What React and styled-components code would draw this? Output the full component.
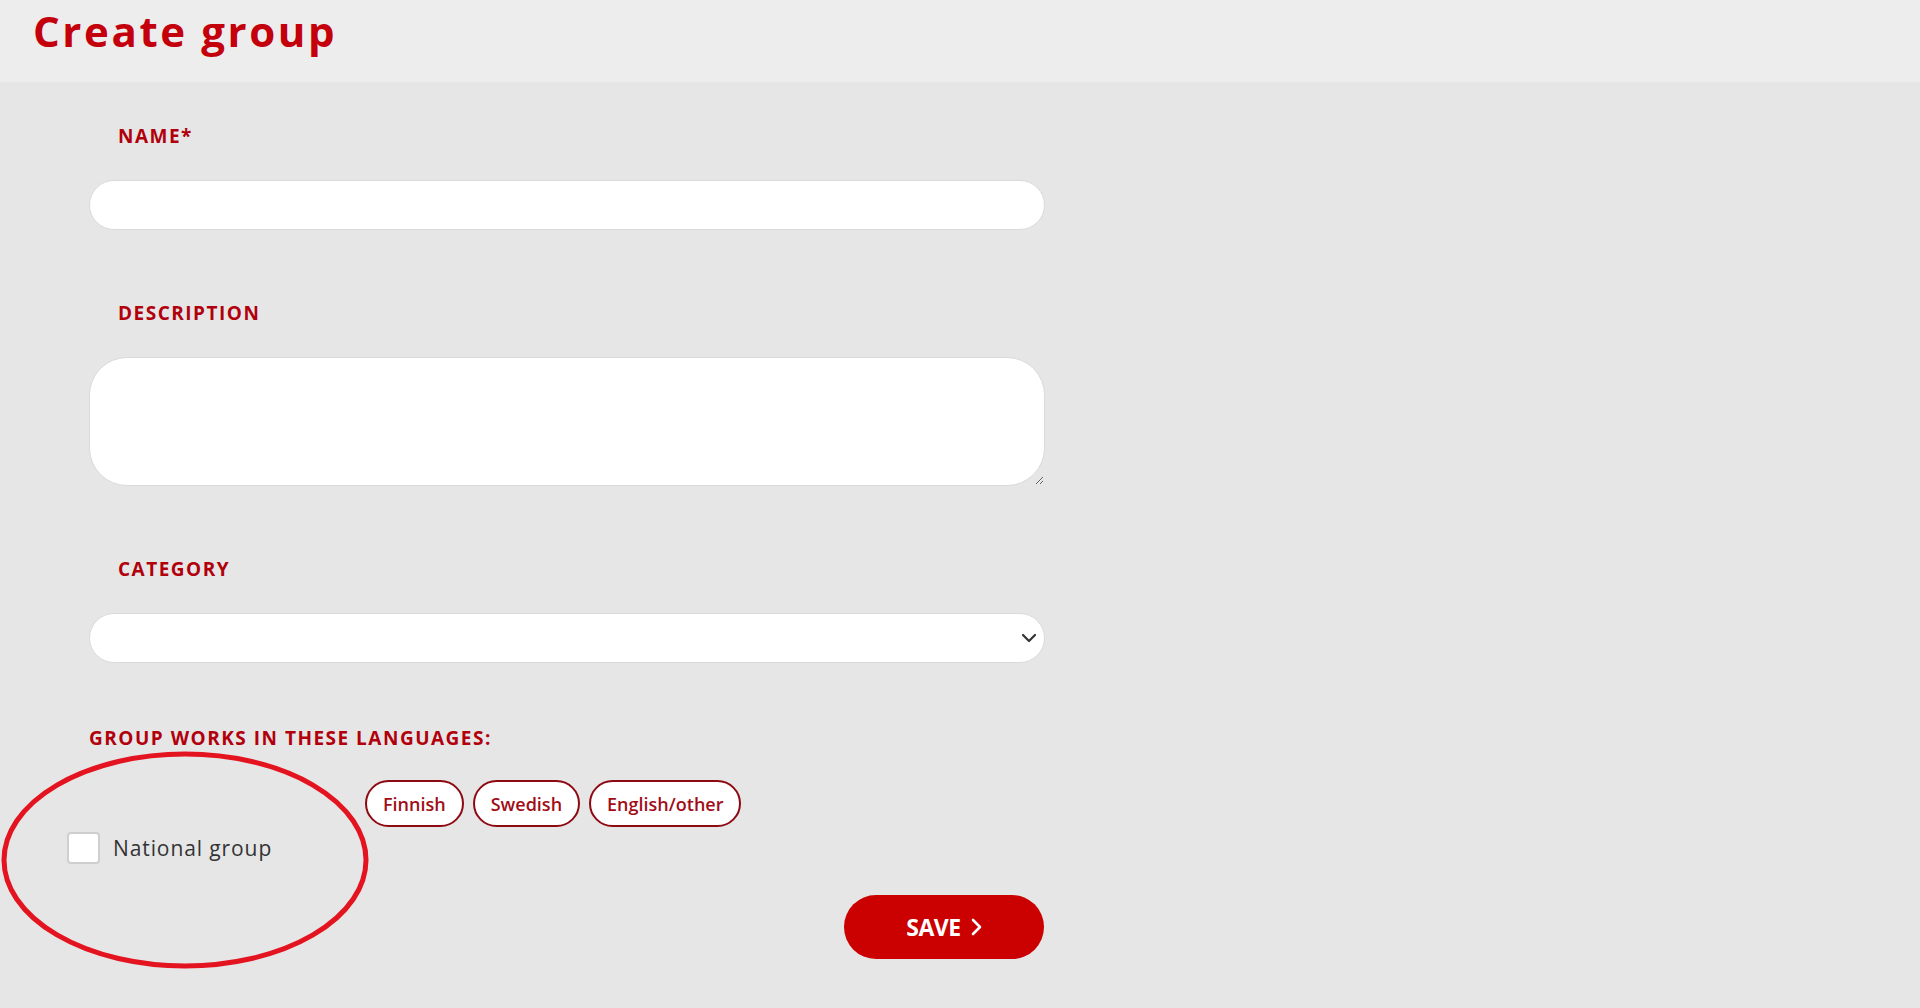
import React from "react";
import styled, { createGlobalStyle } from "styled-components";

const GlobalStyle = createGlobalStyle`
  html, body { margin: 0; padding: 0; }
  body {
    background: #e6e6e6;
    font-family: "Open Sans", "Liberation Sans", sans-serif;
  }
  * { box-sizing: border-box; }
`;

const Page = styled.div`
  position: relative;
  min-height: 1008px;
  background: #e6e6e6;
`;

const Header = styled.header`
  height: 82px;
  background: #ededed;
  padding: 10px 0 0 33px;
`;

const Title = styled.h1`
  margin: 0;
  font-size: 42px;
  line-height: 42px;
  font-weight: 700;
  letter-spacing: 2.6px;
  color: #c3000b;
`;

const Form = styled.form`
  width: 956px;
  margin-left: 89px;
  padding-top: 41px;
  display: flex;
  flex-direction: column;
`;

const Field = styled.div`
  display: flex;
  flex-direction: column;
  margin-bottom: ${(p) => p.$after || 70}px;
`;

const Label = styled.label`
  display: block;
  font-size: 19px;
  line-height: 26px;
  font-weight: 700;
  letter-spacing: 1.5px;
  color: #b1000c;
  text-transform: uppercase;
  padding-left: ${(p) => (p.$flush ? 0 : 29)}px;
  margin-bottom: ${(p) => (p.$flush ? 29 : 31)}px;
`;

const TextInput = styled.input`
  height: 50px;
  width: 100%;
  border: 1px solid #dadada;
  border-radius: 25px;
  background: #fff;
  padding: 0 22px;
  font-size: 18px;
  font-family: inherit;
  outline: none;
`;

const TextArea = styled.textarea`
  height: 129px;
  width: 100%;
  border: 1px solid #dadada;
  border-radius: 38px;
  background: #fff;
  padding: 14px 22px;
  font-size: 18px;
  font-family: inherit;
  resize: vertical;
  outline: none;
`;

const SelectWrap = styled.div`
  position: relative;
  height: 50px;
`;

const Select = styled.select`
  appearance: none;
  height: 50px;
  width: 100%;
  border: 1px solid #dadada;
  border-radius: 25px;
  background: #fff;
  padding: 0 22px;
  font-size: 18px;
  font-family: inherit;
  outline: none;
`;

const Chevron = styled.svg`
  position: absolute;
  right: 8px;
  top: 20px;
  pointer-events: none;
`;

const ChipRow = styled.div`
  display: flex;
  gap: 9px;
  padding-left: 276px;
`;

const Chip = styled.button`
  height: 47px;
  padding: 0 16px;
  border: 2px solid #8e0a12;
  border-radius: 24px;
  background: #fff;
  color: #a10d17;
  font-family: "Open Sans", sans-serif;
  font-size: 18px;
  font-weight: 600;
  cursor: pointer;
`;

const CheckRow = styled.label`
  display: flex;
  align-items: center;
  gap: 13px;
  margin: 5px 0 0 -22px;
  height: 32px;
  cursor: pointer;
`;

const Box = styled.input`
  appearance: none;
  margin: 0;
  width: 33px;
  height: 32px;
  border: 2px solid #cfcfcf;
  border-radius: 4px;
  background: #fff;
`;

const CheckText = styled.span`
  font-size: 21px;
  letter-spacing: 0.9px;
  color: #333;
`;

const Actions = styled.div`
  display: flex;
  justify-content: flex-end;
  margin-top: 31px;
  padding-right: 1px;
`;

const SaveButton = styled.button`
  width: 200px;
  height: 64px;
  border: none;
  border-radius: 32px;
  background: #cb0000;
  color: #fff;
  font-family: "Open Sans", sans-serif;
  font-size: 23px;
  font-weight: 700;
  letter-spacing: -0.5px;
  display: flex;
  align-items: center;
  justify-content: center;
  gap: 9px;
  cursor: pointer;
`;

const Annotation = styled.svg`
  position: absolute;
  left: 0;
  top: 748px;
  pointer-events: none;
`;

const languages = ["Finnish", "Swedish", "English/other"];

export default function App() {
  return (
    <Page>
      <GlobalStyle />
      <Header>
        <Title>Create group</Title>
      </Header>
      <Form onSubmit={(e) => e.preventDefault()}>
        <Field>
          <Label htmlFor="name">Name*</Label>
          <TextInput id="name" type="text" />
        </Field>
        <Field>
          <Label htmlFor="desc">Description</Label>
          <TextArea id="desc" />
        </Field>
        <Field $after={62}>
          <Label htmlFor="cat">Category</Label>
          <SelectWrap>
            <Select id="cat" defaultValue="">
              <option value=""></option>
            </Select>
            <Chevron width="16" height="10" viewBox="0 0 16 10">
              <path d="M2 2l6 6 6-6" fill="none" stroke="#333" strokeWidth="2.2" strokeLinecap="round" strokeLinejoin="round" />
            </Chevron>
          </SelectWrap>
        </Field>
        <Label $flush as="div">Group works in these languages:</Label>
        <ChipRow>
          {languages.map((l) => (
            <Chip key={l} type="button">{l}</Chip>
          ))}
        </ChipRow>
        <CheckRow>
          <Box type="checkbox" />
          <CheckText>National group</CheckText>
        </CheckRow>
        <Actions>
          <SaveButton type="submit">
            SAVE
            <svg width="12" height="20" viewBox="0 0 12 20">
              <path d="M3 3l7 7-7 7" fill="none" stroke="#fff" strokeWidth="2.6" strokeLinecap="round" strokeLinejoin="round" />
            </svg>
          </SaveButton>
        </Actions>
      </Form>
      <Annotation width="380" height="230" viewBox="0 0 380 230">
        <ellipse cx="185" cy="112" rx="181" ry="106" fill="none" stroke="#e3141f" strokeWidth="5" />
      </Annotation>
    </Page>
  );
}
